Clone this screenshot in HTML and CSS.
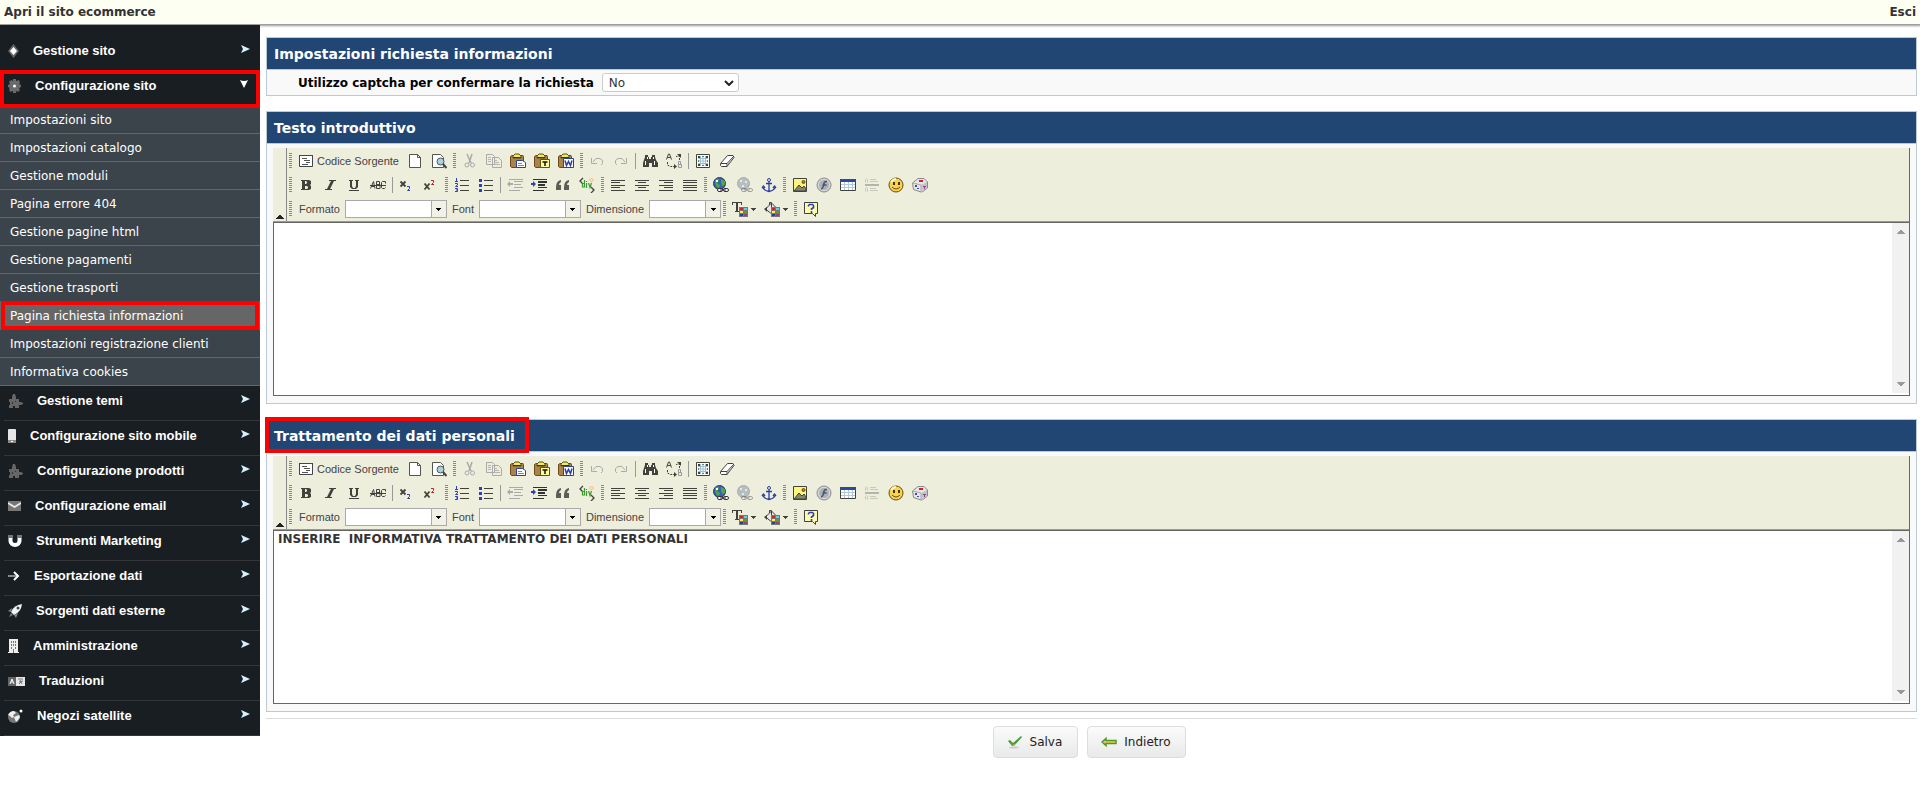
FILE: index.html
```html
<!DOCTYPE html>
<html lang="it">
<head>
<meta charset="utf-8">
<title>Pagina richiesta informazioni</title>
<link rel="stylesheet" href="styles.css">
</head>
<body>
<svg class="sprite" aria-hidden="true">
  <defs>
  <symbol id="arrow-right" viewBox="0 0 9 8"><path d="M0 0L9 4L0 8L2 4z" fill="#d5f1ff"/></symbol>
  <symbol id="arrow-down" viewBox="0 0 8 8"><path d="M0 0Q4 2 8 0L4 8z" fill="#fff"/></symbol>
  <symbol id="m-diamond" viewBox="0 0 11 14"><path d="M5.500 0L11 7L5.500 14L0 7z" fill="#666"/><path d="M5.500 3L9 7L5.500 11L2 7z" fill="#fff"/></symbol>
  <symbol id="m-gear" viewBox="0 0 13 14"><path d="M5 0h3v2l3-1 1 3-1 1 2 1v2l-2 1 1 2-2 2-2-1v2H5v-2l-3 1-1-3 1-1-2-1V6l2-1-1-2 2-2 2 1z" fill="#6a6a6a"/><circle cx="6.500" cy="7" r="1.500" fill="#fff"/></symbol>
  <symbol id="m-puzzle" viewBox="0 0 15 14"><path d="M1 5h3V3L5 0h2l1 3v2h3v3h2l2 1v1l-2 1h-2v3H7v-2H5v2H1v-3h1V8H1z" fill="#666"/><path d="M4 8h1v2H4zM7 7h1v1H7z" fill="#333"/></symbol>
  <symbol id="m-phone" viewBox="0 0 8 14"><rect width="8" height="14" rx="1" fill="#e6e6e6"/><path d="M0 11h8v3H0z" fill="#8a8a8a"/><path d="M3 12h2v1H3z" fill="#fff"/></symbol>
  <symbol id="m-mail" viewBox="0 0 13 14"><path d="M0 2h13v10H0z" fill="#777"/><path d="M0 4l6.500 4L13 4" fill="none" stroke="#eee" stroke-width="1.500"/></symbol>
  <symbol id="m-magnet" viewBox="0 0 14 14"><path d="M2.500 4v3a4.500 4 0 0 0 9 0V4" fill="none" stroke="#fff" stroke-width="4"/><path d="M0 1h5v3H0zM9 1h5v3H9z" fill="#777"/></symbol>
  <symbol id="m-export" viewBox="0 0 12 14"><path d="M0 7h9" stroke="#888" stroke-width="2"/><path d="M6 3l4 4-4 4" fill="none" stroke="#fff" stroke-width="2"/></symbol>
  <symbol id="m-rocket" viewBox="0 0 14 14"><path d="M14 0Q13 8 6 11L3 8Q6 1 14 0z" fill="#f4f4f4"/><path d="M4 4L0 7l3 1zM10 9l-2 5-2-3z" fill="#888"/><circle cx="10" cy="4" r="1.500" fill="#444"/><path d="M3 9l2 2-4 2z" fill="#777"/></symbol>
  <symbol id="m-building" viewBox="0 0 11 14"><path d="M1 0h9v13h1v1H0v-1h1z" fill="#eee"/><path d="M3 2h1v2H3zM5 2h1v2H5zM7 2h1v2H7zM3 5h1v2H3zM5 5h1v2H5zM7 5h1v2H7zM3 8h1v2H3zM7 8h1v2H7zM5 10h1v4H5z" fill="#777"/></symbol>
  <symbol id="m-translate" viewBox="0 0 17 14"><path d="M0 3h8v9H0z" fill="#666"/><path d="M8 3h9v9H8z" fill="#e6e6e6"/><path d="M2 10l2-5 2 5M3 8h2" fill="none" stroke="#fff"/><path d="M10 5h5M11 8l4-1M12 6l2 4M11 10l3-3" fill="none" stroke="#777"/></symbol>
  <symbol id="m-globe" viewBox="0 0 15 14"><circle cx="6" cy="8" r="6" fill="#777"/><path d="M0 6Q2 2 6 2l2 2-3 2 1 2-2 1-2-2zM6 8l5-2 1 2-2 3-2 2z" fill="#f0f0f0"/><circle cx="13" cy="2" r="1.500" fill="#fff"/></symbol>

  <symbol id="t-source" viewBox="0 0 16 16"><path d="M1.500 2.500h13v11h-13z" fill="#fff" stroke="#42464c"/><path d="M1 2h14v1H1z" fill="#2b4a75"/><path d="M4 5h5v1H4zM6 7h6v1H6zM8 9h4v1H8zM4 11h6v1H4z" fill="#555"/></symbol>
  <symbol id="t-new" viewBox="0 0 16 16"><path d="M2.500 1.500h8l3 3v10h-11z" fill="#fff" stroke="#555550"/><path d="M10.500 1.500v3h3" fill="none" stroke="#555550"/></symbol>
  <symbol id="t-preview" viewBox="0 0 16 16"><path d="M1.500 1.500h8l3 3v10h-11z" fill="#fff" stroke="#555550"/><circle cx="9.500" cy="8.500" r="3.500" fill="#a9d3dc" stroke="#555"/><path d="M12 11l3.500 4" stroke="#444" stroke-width="2"/></symbol>
  <symbol id="t-cut" viewBox="0 0 16 16"><path d="M5 1l4 9M10 1L7 10" stroke="#aaa" stroke-width="1.500" fill="none"/><circle cx="5" cy="12" r="2" fill="none" stroke="#aaa"/><circle cx="10.500" cy="12" r="2" fill="none" stroke="#aaa"/></symbol>
  <symbol id="t-copy" viewBox="0 0 16 16"><path d="M.5 1.500h6l2 2v8h-8zM6.500 4.500h6l3 3v7h-9z" fill="#eeeede" stroke="#aaa"/><path d="M2 4.500h3M2 6.500h3M2 8.500h3M8 7.500h3M8 9.500h5M8 11.500h6" stroke="#b5b5ad"/></symbol>
  <symbol id="t-board" viewBox="0 0 16 16"><path d="M.5 3.500L2 2.500h11l.5 1v10l-1 1h-11l-1-1z" fill="#a98349" stroke="#6b4a18"/><path d="M3 5V3l2-2h4l2 2v2z" fill="#f5e94c" stroke="#5a5320"/><path d="M3 4h8v1H3z" fill="#333"/></symbol>
  <symbol id="t-paste" viewBox="0 0 16 16"><use href="#t-board"/><path d="M6.500 7.500h6l3 2v5h-9z" fill="#fff" stroke="#2b3fa0"/><path d="M8 10.500h4M8 12.500h6" stroke="#6e83d8"/></symbol>
  <symbol id="t-paste-text" viewBox="0 0 16 16"><use href="#t-board"/><path d="M6.500 6.500h9v8h-9z" fill="#fffa9a" stroke="#5a5320"/><path d="M8.500 9h5M11 9v4" stroke="#111" stroke-width="1.500"/></symbol>
  <symbol id="t-paste-word" viewBox="0 0 16 16"><use href="#t-board"/><path d="M5.500 5.500h10v9h-10z" fill="#fff" stroke="#2b3fa0"/><path d="M7 7.500l1.500 5 2-4 2 4 1.500-5" fill="none" stroke="#2b3fa0" stroke-width="1.500"/></symbol>
  <symbol id="t-undo" viewBox="0 0 16 16"><path d="M2.500 5v5.500H8M4 9l3-3.500h4l2.500 2v3L12 12" fill="none" stroke="#aaa"/></symbol>
  <symbol id="t-redo" viewBox="0 0 16 16"><path d="M13.500 5v5.500H8M12 9L9 5.500H5L2.500 7.500v3L4 12" fill="none" stroke="#aaa"/></symbol>
  <symbol id="t-find" viewBox="0 0 16 16"><path d="M3 2h3v2h1v2h2V4h1V2h3v2l1 3 2 3v4h-6v-4H7v4H1v-4l1-3 1-3z" fill="#42423c"/><path d="M3.500 8v4M12.500 8v4M5.500 4v2M11.500 4v2" stroke="#fff"/></symbol>
  <symbol id="t-replace" viewBox="0 0 16 16"><path d="M.5 6.500l2-5.500h1l2 5.500M1.500 4.500h3" fill="none" stroke="#42423c"/><path d="M1.500 9v3l3 1.500H8M13.500 7V3L10 3.500" fill="none" stroke="#42423c" stroke-dasharray="2 1"/><path d="M8 11l3 2.500L8 16zM11 1h4v4z" fill="#42423c"/><path d="M12.500 8.500h2v3h-2zM12.500 11.500h3v3h-3z" fill="none" stroke="#999"/></symbol>
  <symbol id="t-select" viewBox="0 0 16 16"><path d="M1.500 1.500h13v13h-13z" fill="#fff" stroke="#42423c"/><path d="M5.500 3v10M8 3v10M10.500 3v10M3 5.500h10M3 8h10M3 10.500h10" fill="none" stroke="#9cc2d0"/><path d="M3 3h2v2H3zM11 3h2v2h-2zM3 11h2v2H3zM11 11h2v2h-2z" fill="#42423c"/><path d="M7 3h2v1H7zM7 12h2v1H7zM3 7h1v2H3zM12 7h1v2h-1z" fill="#777"/></symbol>
  <symbol id="t-eraser" viewBox="0 0 16 16"><path d="M1.500 10.500l7-8h5.500l1 2-7 9H2.500l-1-1z" fill="#fff" stroke="#42423c"/><path d="M2 10.500h6l6.500-7M8 10.500v3" fill="none" stroke="#42423c"/><path d="M8.500 11L14.500 4.500 8.500 12.500z" fill="#999"/></symbol>
  <symbol id="t-bold" viewBox="0 0 16 16"><path d="M3 3h8l2 1v3l-1 1 1 1v3l-2 1H3v-1h1V4H3zM7 4v3h1l1-1V5L8 4zM7 9v3h2l1-1v-1L9 9z" fill="#42423c" fill-rule="evenodd"/></symbol>
  <symbol id="t-italic" viewBox="0 0 16 16"><path d="M7 3h7v1h-2L8 12h2v1H3v-1h2L9 4H7z" fill="#42423c"/></symbol>
  <symbol id="t-underline" viewBox="0 0 16 16"><path d="M3 3h4v1H6v5l1 2h2l1-2V4H9V3h4v1h-1v6l-2 2H6l-2-2V4H3zM3 13h10v1H3z" fill="#42423c"/></symbol>
  <symbol id="t-strike" viewBox="0 0 16 16"><path d="M.5 11.500l3-7 1.500 7M1.500 9.500h3M6.500 4.500h3v3h-3zM6.500 7.500h3.500v4H6.500zM15.500 6.500v-2h-3l-1 1v5l1 1h2l1-1" fill="none" stroke="#42423c"/><path d="M0 8.500h16" stroke="#42423c"/></symbol>
  <symbol id="t-sub" viewBox="0 0 16 16"><path d="M1.500 4.500l5 5M6.500 4.500l-5 5" stroke="#42423c" stroke-width="1.800"/><path d="M8 9.500h2.500v2l-2 2H11" fill="none" stroke="#2b3fc0"/></symbol>
  <symbol id="t-sup" viewBox="0 0 16 16"><path d="M1.500 6.500l5 6M6.500 6.500l-5 6" stroke="#42423c" stroke-width="1.800"/><path d="M8 3.500h2.500v2l-2 2H11" fill="none" stroke="#c0202b"/></symbol>
  <symbol id="t-ol" viewBox="0 0 16 16"><path d="M6 3h9v1H6zM6 8h9v1H6zM6 13h9v1H6z" fill="#42423c"/><path d="M2.500 1v4M1 4.500h3M1 6.500h2.500v1.500L1.500 9.500H4M1 11.500h2.500v3H1M2 13h2" fill="none" stroke="#2b3fc0"/></symbol>
  <symbol id="t-ul" viewBox="0 0 16 16"><path d="M6 3h9v1H6zM6 8h9v1H6zM6 13h9v1H6z" fill="#42423c"/><path d="M1 2h3v3H1zM1 7h3v3H1zM1 12h3v3H1z" fill="#2b3fc0"/></symbol>
  <symbol id="t-outdent" viewBox="0 0 16 16"><path d="M2 2h14v1H2zM7 4h9v1H7zM7 7h7v1H7zM7 10h9v1H7zM2 13h11v1H2zM0 7l3-3v2h3v2H3v2z" fill="#aaa"/></symbol>
  <symbol id="t-indent" viewBox="0 0 16 16"><path d="M2 2h14v1H2zM7 4h9v2H7zM7 7h7v2H7zM7 10h9v1H7zM2 13h11v1H2z" fill="#33332e"/><path d="M5 7L2 4v2H0v2h2v2z" fill="#2b3fc0"/></symbol>
  <symbol id="t-quote" viewBox="0 0 16 16"><path d="M6 3Q1 4 1 10v3h5V8H4Q4 6 6 5zM14 3Q9 4 9 10v3h5V8h-2q0-2 2-3z" fill="#5d5d57"/></symbol>
  <symbol id="t-div" viewBox="0 0 16 16"><path d="M4 1L1 4l3 3M12 10l3 3-3 3" fill="none" stroke="#42423c" stroke-width="1.300"/><path d="M5.500 3v7h-2V6.500h2M7.500 6v5M7.500 4v1M9.500 6l1.500 4.500L12.500 6" fill="none" stroke="#3c9a2f" stroke-width="1.200"/><path d="M12.500 1L14.500 3l-2 2-2-2z" fill="none" stroke="#f5b870"/></symbol>
  <symbol id="t-left" viewBox="0 0 16 16"><path d="M1 3h14v1H1zM1 5h9v1H1zM1 8h14v1H1zM1 10h9v1H1zM1 13h14v1H1z" fill="#42423c"/></symbol>
  <symbol id="t-center" viewBox="0 0 16 16"><path d="M1 3h14v1H1zM4 5h8v1H4zM1 8h14v1H1zM4 10h8v1H4zM1 13h14v1H1z" fill="#42423c"/></symbol>
  <symbol id="t-right" viewBox="0 0 16 16"><path d="M1 3h14v1H1zM6 5h9v1H6zM1 8h14v1H1zM6 10h9v1H6zM1 13h14v1H1z" fill="#42423c"/></symbol>
  <symbol id="t-justify" viewBox="0 0 16 16"><path d="M1 3h14v1H1zM1 5h14v1H1zM1 8h14v1H1zM1 10h14v1H1zM1 13h14v1H1z" fill="#42423c"/></symbol>
  <symbol id="t-chain" viewBox="0 0 16 16"><rect x="4.500" y="11.500" width="5" height="3" rx="1.500" fill="#fff" stroke="#333"/><rect x="10.500" y="11.500" width="5" height="3" rx="1.500" fill="#fff" stroke="#333"/><path d="M7 13h6" stroke="#333"/></symbol>
  <symbol id="t-link" viewBox="0 0 16 16"><circle cx="6.500" cy="6.500" r="6" fill="#3a5fb5" stroke="#223a66"/><path d="M2 3q3-3 4 0l-2 3 3 2-1 3q-4-1-4-8zM8 2l4 2v4l-3 1-1-3z" fill="#4ea54a"/><path d="M3 3h2v2H3z" fill="#fff"/><use href="#t-chain"/></symbol>
  <symbol id="t-unlink" viewBox="0 0 16 16"><circle cx="6.500" cy="6.500" r="6" fill="#b5bfc2" stroke="#aaa"/><path d="M3 3h2v2H3zM8 4h2v2H8zM5 8h2v2H5z" fill="#e4e8e6"/><use href="#t-chain" opacity=".4"/></symbol>
  <symbol id="t-anchor" viewBox="0 0 16 16"><circle cx="8" cy="3" r="1.500" fill="none" stroke="#2b3fa0"/><path d="M8 5v10M5 6.500h6M2 9v2q2 3 6 3.500 4-.5 6-3.500V9M1 11l1.500-2L4 11M12 11l1.500-2L15 11" fill="none" stroke="#2b3fa0" stroke-width="1.300"/></symbol>
  <symbol id="t-image" viewBox="0 0 16 16"><path d="M1.500 1.500h13v13h-13z" fill="#fdf67c" stroke="#42423c"/><path d="M2 14l5-6 3 3 2-2 2 3v2z" fill="#888870" stroke="#42423c"/><circle cx="11.500" cy="5" r="1.500" fill="#c07820" stroke="#6b4a18"/></symbol>
  <symbol id="t-flash" viewBox="0 0 16 16"><circle cx="8" cy="8" r="7" fill="#c4c8cc" stroke="#8f8f8f"/><circle cx="8" cy="8" r="5.500" fill="#a9b0b8" stroke="#dcdcdc"/><path d="M11 4.500H9.500Q8 5 7.500 8.500 7 11.500 5 12M6.500 8h4" fill="none" stroke="#4b5566" stroke-width="1.500"/></symbol>
  <symbol id="t-table" viewBox="0 0 16 16"><path d="M.5 2.500h15v11H.5z" fill="#fff" stroke="#42423c"/><path d="M0 2h16v3H0z" fill="#2b4a9a"/><path d="M1 7.500h14M1 10.500h14M4.500 5v8M8.500 5v8M12.500 5v8" stroke="#b5c9dc"/></symbol>
  <symbol id="t-hr" viewBox="0 0 16 16"><path d="M1 7h14v2H1z" fill="#b5b5ad"/><path d="M1.500 5.500V2.500l1-1 1 1v3M1.500 14.500v-3l1-1 1 1v3M6 2.500h6M6 4.500h8M6 11.500h6M6 13.500h8" fill="none" stroke="#c8c8bd"/></symbol>
  <symbol id="t-smiley" viewBox="0 0 16 16"><circle cx="8" cy="8" r="7" fill="#f7d44c" stroke="#6b4a18"/><path d="M3 5q2-3 5-3" stroke="#fff6c0" stroke-width="2" fill="none"/><path d="M5 5h2v3H5zM10 5h2v3h-2z" fill="#42320c"/><path d="M4 10q4 4 8 0" fill="none" stroke="#6b4a18"/></symbol>
  <symbol id="t-dice" viewBox="0 0 16 16"><path d="M.5 6L6 1.500h6L15.500 5v6L11 14.500 9 15 1.500 12.500z" fill="#e6e6e6" stroke="#8a8a8a"/><path d="M9 8l6-3v6l-5 4z" fill="#c4c4c4"/><path d="M1 6l8 2v7" fill="none" stroke="#aaa"/><path d="M7 3h4v2H7z" fill="#d8202b"/><path d="M3 8h2v2H3zM5 11h2v1H5z" fill="#3b46c0"/><path d="M11 9h3v1h-1v2h-1v-2h-1z" fill="#9a3a9a"/></symbol>
  <symbol id="t-swatch" viewBox="0 0 16 16"><path d="M7 6h9v10H7z" fill="#777"/><path d="M8 7h3v2H8z" fill="#e02020"/><path d="M12 7h3v2h-3z" fill="#70c8f0"/><path d="M8 10h3v2H8z" fill="#fff04c"/><path d="M12 10h3v2h-3z" fill="#5aa02c"/><path d="M8 13h3v2H8z" fill="#2b3fa0"/><path d="M12 13h3v2h-3z" fill="#a03a8a"/></symbol>
  <symbol id="t-color" viewBox="0 0 16 16"><path d="M0 1h10v3H9V2H6v8h1v1H3v-1h1V2H1v2H0z" fill="#42423c"/><use href="#t-swatch"/></symbol>
  <symbol id="t-fill" viewBox="0 0 16 16"><path d="M1.500 8l6-6 5 5-6 5z" fill="#e8e8e4" stroke="#42423c"/><path d="M7.500 6V1.500h-2V4" fill="none" stroke="#42423c"/><path d="M0 8l3-2v5z" fill="#42423c"/><use href="#t-swatch"/></symbol>
  <symbol id="t-help" viewBox="0 0 16 16"><path d="M1.500 1.500h13v11h-2v3l-3-3h-8z" fill="#fffcb0" stroke="#42423c"/><path d="M5.500 5.500V4.500L6.500 3.500h3l1 1v2L8.500 8v1M8.500 10v2" fill="none" stroke="#2b3fc0" stroke-width="1.600"/></symbol>
  <symbol id="caret" viewBox="0 0 5 3"><path d="M0 0h5v1H4v1H3v1H2V2H1V1H0z" fill="currentColor"/></symbol>
  <symbol id="tri-up" viewBox="0 0 8 4"><path d="M3 0h2v1h1v1h1v1h1v1H0V3h1V2h1V1h1z" fill="currentColor"/></symbol>
  </defs>
</svg>

<header class="topbar">
  <a href="#">Apri il sito ecommerce</a>
  <a href="#">Esci</a>
</header>

<div class="layout">
  <nav class="sidebar">
    <a class="group" href="#"><svg width="11" height="14"><use href="#m-diamond"/></svg><span>Gestione sito</span><svg class="go" width="9" height="8"><use href="#arrow-right"/></svg></a>
    <a class="group open" href="#"><svg width="13" height="14"><use href="#m-gear"/></svg><span>Configurazione sito</span><svg class="go" width="8" height="8"><use href="#arrow-down"/></svg></a>
    <ul class="submenu">
      <li><a href="#">Impostazioni sito</a></li>
      <li><a href="#">Impostazioni catalogo</a></li>
      <li><a href="#">Gestione moduli</a></li>
      <li><a href="#">Pagina errore 404</a></li>
      <li><a href="#">Gestione pagine html</a></li>
      <li><a href="#">Gestione pagamenti</a></li>
      <li><a href="#">Gestione trasporti</a></li>
      <li><a class="current" href="#">Pagina richiesta informazioni</a></li>
      <li><a href="#">Impostazioni registrazione clienti</a></li>
      <li><a href="#">Informativa cookies</a></li>
    </ul>
    <a class="group" href="#"><svg width="15" height="14"><use href="#m-puzzle"/></svg><span>Gestione temi</span><svg class="go" width="9" height="8"><use href="#arrow-right"/></svg></a>
    <a class="group" href="#"><svg width="8" height="14"><use href="#m-phone"/></svg><span>Configurazione sito mobile</span><svg class="go" width="9" height="8"><use href="#arrow-right"/></svg></a>
    <a class="group" href="#"><svg width="15" height="14"><use href="#m-puzzle"/></svg><span>Configurazione prodotti</span><svg class="go" width="9" height="8"><use href="#arrow-right"/></svg></a>
    <a class="group" href="#"><svg width="13" height="14"><use href="#m-mail"/></svg><span>Configurazione email</span><svg class="go" width="9" height="8"><use href="#arrow-right"/></svg></a>
    <a class="group" href="#"><svg width="14" height="14"><use href="#m-magnet"/></svg><span>Strumenti Marketing</span><svg class="go" width="9" height="8"><use href="#arrow-right"/></svg></a>
    <a class="group" href="#"><svg width="12" height="14"><use href="#m-export"/></svg><span>Esportazione dati</span><svg class="go" width="9" height="8"><use href="#arrow-right"/></svg></a>
    <a class="group" href="#"><svg width="14" height="14"><use href="#m-rocket"/></svg><span>Sorgenti dati esterne</span><svg class="go" width="9" height="8"><use href="#arrow-right"/></svg></a>
    <a class="group" href="#"><svg width="11" height="14"><use href="#m-building"/></svg><span>Amministrazione</span><svg class="go" width="9" height="8"><use href="#arrow-right"/></svg></a>
    <a class="group" href="#"><svg width="17" height="14"><use href="#m-translate"/></svg><span>Traduzioni</span><svg class="go" width="9" height="8"><use href="#arrow-right"/></svg></a>
    <a class="group" href="#"><svg width="15" height="14"><use href="#m-globe"/></svg><span>Negozi satellite</span><svg class="go" width="9" height="8"><use href="#arrow-right"/></svg></a>
  </nav>

  <main class="content">
    <section class="panel">
      <h2>Impostazioni richiesta informazioni</h2>
      <div class="field">
        <label for="captcha">Utilizzo captcha per confermare la richiesta</label>
        <span class="select">
          <select id="captcha"><option>No</option><option>Si</option></select>
          <svg width="10" height="6" viewBox="0 0 10 6"><path d="M1 1l4 4 4-4" fill="none" stroke="#222" stroke-width="2"/></svg>
        </span>
      </div>
    </section>

    <section class="panel">
      <h2>Testo introduttivo</h2>
      <div class="editor">
        <div class="page">
          <textarea aria-label="Testo introduttivo"></textarea>
          <div class="scroll"><svg width="8" height="4"><use href="#tri-up"/></svg><svg class="down" width="8" height="4"><use href="#tri-up"/></svg></div>
        </div>
      </div>
    </section>

    <section class="panel">
      <h2><span class="marked">Trattamento dei dati personali</span></h2>
      <div class="editor">
        <div class="page">
          <textarea aria-label="Trattamento dei dati personali">INSERIRE  INFORMATIVA TRATTAMENTO DEI DATI PERSONALI</textarea>
          <div class="scroll"><svg width="8" height="4"><use href="#tri-up"/></svg><svg class="down" width="8" height="4"><use href="#tri-up"/></svg></div>
        </div>
      </div>
    </section>

    <div class="actions">
      <button type="button"><svg width="16" height="16" viewBox="0 0 16 16"><ellipse cx="7" cy="13.500" rx="5" ry="1" fill="#ccc"/><path d="M1 7l2-1 3 3 8-7 1 1-8 9H5z" fill="#3f9c35"/><path d="M3 8l3 3 3-2-2 3H6z" fill="#d3b34a"/></svg>Salva</button>
      <button type="button"><svg width="16" height="16" viewBox="0 0 16 16"><path d="M1 8l4-3.500v2h10v3H5v2z" fill="#f5c65a" stroke="#4d9a2b" stroke-width="1.500"/></svg>Indietro</button>
    </div>
  </main>
</div>

<template id="toolbar">
  <div class="toolbar">
    <button type="button" class="collapse" aria-label="Riduci la barra"><svg width="8" height="4"><use href="#tri-up"/></svg></button>
    <div class="rows">
      <div class="row">
        <i class="grip"></i>
        <button type="button" class="source"><svg><use href="#t-source"/></svg>Codice Sorgente</button>
        <button type="button" aria-label="Nuova pagina"><svg><use href="#t-new"/></svg></button>
        <button type="button" aria-label="Anteprima"><svg><use href="#t-preview"/></svg></button>
        <i class="grip"></i>
        <button type="button" aria-label="Taglia"><svg><use href="#t-cut"/></svg></button>
        <button type="button" aria-label="Copia"><svg><use href="#t-copy"/></svg></button>
        <button type="button" aria-label="Incolla"><svg><use href="#t-paste"/></svg></button>
        <button type="button" aria-label="Incolla come testo"><svg><use href="#t-paste-text"/></svg></button>
        <button type="button" aria-label="Incolla da Word"><svg><use href="#t-paste-word"/></svg></button>
        <i class="grip"></i>
        <button type="button" aria-label="Annulla"><svg><use href="#t-undo"/></svg></button>
        <button type="button" aria-label="Ripristina"><svg><use href="#t-redo"/></svg></button>
        <i class="sep"></i>
        <button type="button" aria-label="Trova"><svg><use href="#t-find"/></svg></button>
        <button type="button" aria-label="Sostituisci"><svg><use href="#t-replace"/></svg></button>
        <i class="sep"></i>
        <button type="button" aria-label="Seleziona tutto"><svg><use href="#t-select"/></svg></button>
        <button type="button" aria-label="Elimina formattazione"><svg><use href="#t-eraser"/></svg></button>
      </div>
      <div class="row">
        <i class="grip"></i>
        <button type="button" aria-label="Grassetto"><svg><use href="#t-bold"/></svg></button>
        <button type="button" aria-label="Corsivo"><svg><use href="#t-italic"/></svg></button>
        <button type="button" aria-label="Sottolineato"><svg><use href="#t-underline"/></svg></button>
        <button type="button" aria-label="Barrato"><svg><use href="#t-strike"/></svg></button>
        <i class="sep"></i>
        <button type="button" aria-label="Pedice"><svg><use href="#t-sub"/></svg></button>
        <button type="button" aria-label="Apice"><svg><use href="#t-sup"/></svg></button>
        <i class="grip"></i>
        <button type="button" aria-label="Elenco numerato"><svg><use href="#t-ol"/></svg></button>
        <button type="button" aria-label="Elenco puntato"><svg><use href="#t-ul"/></svg></button>
        <i class="sep"></i>
        <button type="button" aria-label="Riduci rientro"><svg><use href="#t-outdent"/></svg></button>
        <button type="button" aria-label="Aumenta rientro"><svg><use href="#t-indent"/></svg></button>
        <button type="button" aria-label="Citazione"><svg><use href="#t-quote"/></svg></button>
        <button type="button" aria-label="Crea DIV"><svg><use href="#t-div"/></svg></button>
        <i class="grip"></i>
        <button type="button" aria-label="Allinea a sinistra"><svg><use href="#t-left"/></svg></button>
        <button type="button" aria-label="Centra"><svg><use href="#t-center"/></svg></button>
        <button type="button" aria-label="Allinea a destra"><svg><use href="#t-right"/></svg></button>
        <button type="button" aria-label="Giustifica"><svg><use href="#t-justify"/></svg></button>
        <i class="grip"></i>
        <button type="button" aria-label="Collegamento"><svg><use href="#t-link"/></svg></button>
        <button type="button" aria-label="Elimina collegamento"><svg><use href="#t-unlink"/></svg></button>
        <button type="button" aria-label="Ancora"><svg><use href="#t-anchor"/></svg></button>
        <i class="grip"></i>
        <button type="button" aria-label="Immagine"><svg><use href="#t-image"/></svg></button>
        <button type="button" aria-label="Flash"><svg><use href="#t-flash"/></svg></button>
        <button type="button" aria-label="Tabella"><svg><use href="#t-table"/></svg></button>
        <button type="button" aria-label="Riga orizzontale"><svg><use href="#t-hr"/></svg></button>
        <button type="button" aria-label="Emoticon"><svg><use href="#t-smiley"/></svg></button>
        <button type="button" aria-label="Gioco"><svg><use href="#t-dice"/></svg></button>
      </div>
      <div class="row">
        <i class="grip"></i>
        <label class="combo">Formato<span class="box"><select><option></option></select><b><svg><use href="#caret"/></svg></b></span></label>
        <label class="combo">Font<span class="box"><select><option></option></select><b><svg><use href="#caret"/></svg></b></span></label>
        <label class="combo small">Dimensione<span class="box"><select><option></option></select><b><svg><use href="#caret"/></svg></b></span></label>
        <i class="grip"></i>
        <button type="button" class="menu" aria-label="Colore testo"><svg><use href="#t-color"/></svg><svg class="caret"><use href="#caret"/></svg></button>
        <button type="button" class="menu" aria-label="Colore sfondo"><svg><use href="#t-fill"/></svg><svg class="caret"><use href="#caret"/></svg></button>
        <i class="grip"></i>
        <button type="button" aria-label="Informazioni"><svg><use href="#t-help"/></svg></button>
      </div>
    </div>
  </div>
</template>
<script src="app.js"></script>
</body>
</html>
```
FILE: styles.css
```css
* { box-sizing: border-box; }
body { margin: 0; background: #fff; color: #000; font: 12px/16px Verdana, "DejaVu Sans", sans-serif; }
a { color: inherit; text-decoration: none; }
svg { display: block; flex: none; }
button { font: inherit; color: inherit; }
.sprite { position: absolute; width: 0; height: 0; }

.topbar {
  display: flex; justify-content: space-between; height: 24px; padding: 4px;
  background: #fdfff3; color: #333; font-weight: bold; font-size: 12px;
  box-shadow: 0 1px 2px 1px #999;
}
.layout { display: flex; align-items: flex-start; margin-top: 1px; }

.sidebar { position: relative; flex: 0 0 260px; padding-top: 11px; background: #191e22; color: #fff; }
.group {
  position: relative; display: flex; align-items: flex-start; gap: 14px; height: 35px; margin-left: 4px;
  padding: 8px 10px 0 4px; border-bottom: 1px solid #35353a;
  font: bold 13px/14px "Liberation Sans", Arial, sans-serif;
}
.group:first-child { border-bottom-color: transparent; }
.group .go { margin: 1px 0 0 auto; }
.group.open { margin-left: 0; padding-left: 8px; padding-right: 12px; }
.group.open::after { content: ""; position: absolute; inset: -1px 0 -3px; border: 4px solid #f00; z-index: 1; }
.submenu { margin: 0; padding: 0; list-style: none; background: #3c444b; }
.submenu a { position: relative; display: block; height: 28px; padding: 6px 10px; border-bottom: 1px solid #666; }
.submenu .current { background: #666; }
.submenu .current::after { content: ""; position: absolute; inset: -1px 1px -1px; border: 4px solid #f00; }

.content { flex: 1; min-width: 0; padding: 12px 3px 0 6px; }
.panel { margin-bottom: 15px; border: 1px solid #bccad6; background: #f9f9f9; }
.panel:nth-of-type(3) { margin-bottom: 6px; }
.panel h2 {
  display: flex; align-items: center; height: 32px; margin: 0; padding: 0 7px;
  border-bottom: 1px solid #bccad6; background: #224674; color: #fff;
  font-size: 14px; line-height: 20px;
}
.panel h2 .marked { position: relative; }
.panel h2 .marked::after { content: ""; position: absolute; inset: -9px -14px -7px -9px; border: 4px solid #f00; }

.field { display: flex; align-items: center; gap: 8px; height: 25px; padding-left: 31px; }
.field label { font-weight: bold; }
.select { display: grid; align-items: center; width: 137px; }
.select > * { grid-area: 1 / 1; }
.select select {
  appearance: none; height: 19px; padding: 0 6px; border: 1px solid #ccc; border-radius: 3px;
  background: #fff; color: #333; font: inherit;
}
.select svg { justify-self: end; margin-right: 5px; pointer-events: none; }

.editor { margin: 4px 6px 7px; border-right: 1px solid #666; }
.toolbar {
  display: flex; height: 74px; border-bottom: 1px solid #999; background: #eeeedd; color: #444;
  font: 11px/16px "Liberation Sans", Arial, sans-serif;
}
.toolbar button { display: flex; align-items: center; justify-content: center; width: 24px; height: 24px; padding: 0; border: 0; background: none; }
.toolbar button svg { width: 16px; height: 16px; }
.toolbar .collapse { align-self: stretch; align-items: flex-end; width: 14px; height: auto; padding-bottom: 2px; border-right: 1px solid #888; color: #222; }
.toolbar .collapse svg { width: 8px; height: 4px; }
.row { display: flex; align-items: center; height: 24px; }
.rows { padding-top: 1px; }
.grip { width: 3px; height: 16px; margin: 0 2px; background: repeating-linear-gradient(#888 0 1px, transparent 1px 2px); }
.sep { width: 1px; height: 16px; margin: 0 2px; background: #999; }
.toolbar .source { justify-content: flex-start; gap: 3px; width: 109px; padding-left: 4px; white-space: nowrap; }
.combo { display: flex; align-items: center; gap: 5px; padding-left: 5px; }
.box { display: grid; width: 102px; height: 18px; border: 1px solid #aaa; background: #fff; }
.small .box { width: 72px; }
.box > * { grid-area: 1 / 1; }
.box select { appearance: none; width: 100%; border: 0; background: none; }
.box b { justify-self: end; display: flex; align-items: center; justify-content: center; width: 15px; border-left: 1px solid #aaa; background: #f1f1e6; color: #000; pointer-events: none; }
.box b svg, .toolbar .menu .caret { width: 5px; height: 3px; }
.toolbar .menu { width: 32px; gap: 3px; }

.page { display: flex; height: 174px; border: solid #666; border-width: 1px 0 1px 1px; background: #fff; }
.page textarea {
  flex: 1; resize: none; overflow: hidden; padding: 0 4px; border: 0; outline: 0; background: #fff;
  color: #333; font: bold 12px/16px Verdana, "DejaVu Sans", sans-serif;
}
.scroll { display: flex; flex-direction: column; align-items: center; justify-content: space-between; width: 17px; padding: 7px 0; margin-bottom: 2px; background: #f1f1f1; color: #999; }
.down { transform: rotate(180deg); }

.actions { display: flex; justify-content: center; gap: 9px; padding: 7px 4px 0 0; border-top: 1px solid #ddd; }
.actions button {
  display: flex; align-items: center; gap: 7px; height: 32px; padding: 0 15px 0 13px;
  border: 1px solid #ddd; border-radius: 4px; background: linear-gradient(#fbfbfb, #e8e9e9); color: #222;
}
```
FILE: app.js
```js
const toolbar = document.getElementById('toolbar');
document.querySelectorAll('.editor').forEach((editor) => {
  editor.prepend(toolbar.content.cloneNode(true));
});
```
